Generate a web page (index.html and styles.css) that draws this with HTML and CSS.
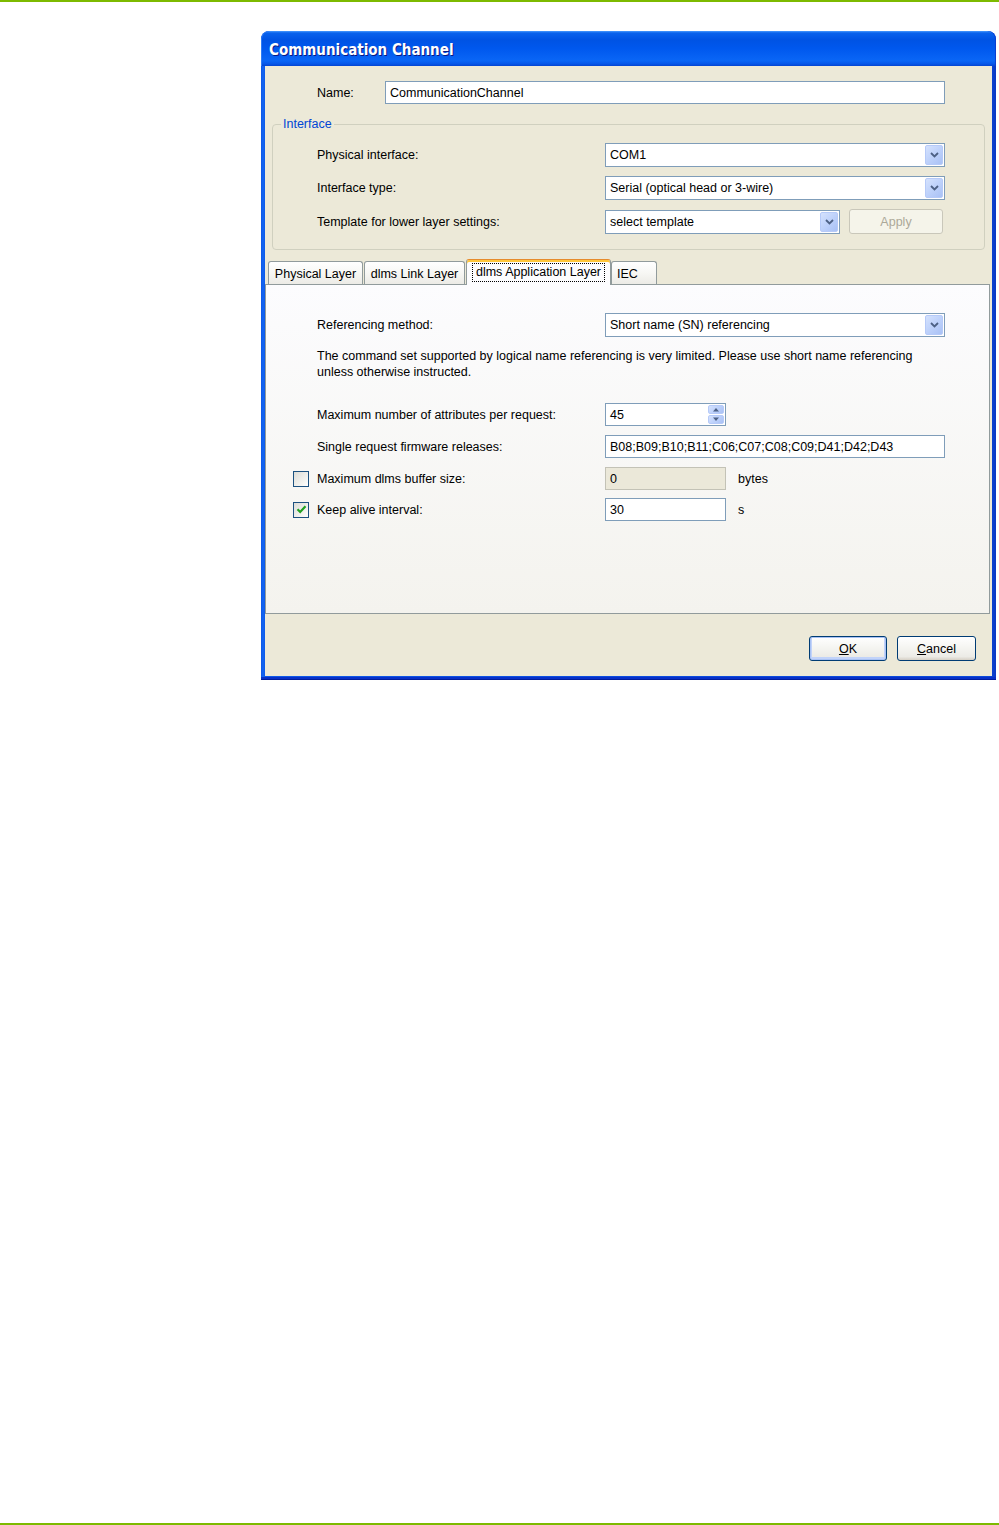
FILE: index.html
```html
<!DOCTYPE html>
<html lang="en">
<head>
<meta charset="utf-8">
<title>Communication Channel</title>
<link rel="stylesheet" href="styles.css">
</head>
<body>
<div class="topline"></div>
<main class="page">
  <section class="dialog">
    <header class="titlebar"><h1>Communication Channel</h1></header>
    <div class="frame">
      <div class="client">
        <div class="name-row">
          <span class="name-lbl">Name:</span>
          <div class="tb name-tb">CommunicationChannel</div>
        </div>

        <fieldset class="group">
          <legend>Interface</legend>
          <div class="grow">
            <span class="glbl">Physical interface:</span>
            <div class="combo w340"><span class="cval">COM1</span><span class="drop"><svg width="9" height="6" viewBox="0 0 9 6"><path d="M1 1 L4.5 4.5 L8 1" fill="none" stroke="#4D6185" stroke-width="1.8"/></svg></span></div>
          </div>
          <div class="grow">
            <span class="glbl">Interface type:</span>
            <div class="combo w340"><span class="cval">Serial (optical head or 3-wire)</span><span class="drop"><svg width="9" height="6" viewBox="0 0 9 6"><path d="M1 1 L4.5 4.5 L8 1" fill="none" stroke="#4D6185" stroke-width="1.8"/></svg></span></div>
          </div>
          <div class="grow">
            <span class="glbl">Template for lower layer settings:</span>
            <div class="combo w235"><span class="cval">select template</span><span class="drop"><svg width="9" height="6" viewBox="0 0 9 6"><path d="M1 1 L4.5 4.5 L8 1" fill="none" stroke="#4D6185" stroke-width="1.8"/></svg></span></div>
            <button class="btn-disabled" type="button">Apply</button>
          </div>
        </fieldset>

        <nav class="tabs">
          <div class="tab t1">Physical Layer</div>
          <div class="tab t2">dlms Link Layer</div>
          <div class="tab t3 active"><span class="focus">dlms Application Layer</span></div>
          <div class="tab t4">IEC</div>
        </nav>

        <div class="panel">
          <div class="frow">
            <span class="lead"></span>
            <span class="flbl">Referencing method:</span>
            <div class="combo w340 h24"><span class="cval">Short name (SN) referencing</span><span class="drop"><svg width="9" height="6" viewBox="0 0 9 6"><path d="M1 1 L4.5 4.5 L8 1" fill="none" stroke="#4D6185" stroke-width="1.8"/></svg></span></div>
          </div>
          <p class="note">The command set supported by logical name referencing is very limited. Please use short name referencing unless otherwise instructed.</p>

          <div class="frow first">
            <span class="lead"></span>
            <span class="flbl">Maximum number of attributes per request:</span>
            <div class="tb spin w121"><span class="cval">45</span>
              <span class="spinbtns">
                <span class="sb"><svg width="8" height="5" viewBox="0 0 8 5"><path d="M1 4.5 L4 1 L7 4.5 Z" fill="#4D6185"/></svg></span>
                <span class="sb"><svg width="8" height="5" viewBox="0 0 8 5"><path d="M1 0.5 L4 4 L7 0.5 Z" fill="#4D6185"/></svg></span>
              </span>
            </div>
          </div>
          <div class="frow">
            <span class="lead"></span>
            <span class="flbl">Single request firmware releases:</span>
            <div class="tb w340">B08;B09;B10;B11;C06;C07;C08;C09;D41;D42;D43</div>
          </div>
          <div class="frow">
            <span class="lead"><span class="cb"></span></span>
            <span class="flbl">Maximum dlms buffer size:</span>
            <div class="tb w121 disabled">0</div>
            <span class="unit">bytes</span>
          </div>
          <div class="frow last">
            <span class="lead"><span class="cb"><svg width="11" height="11" viewBox="0 0 11 11"><path d="M1.5 5.2 L4.2 8 L9.5 2.2" fill="none" stroke="#21A121" stroke-width="2.2"/></svg></span></span>
            <span class="flbl">Keep alive interval:</span>
            <div class="tb w121">30</div>
            <span class="unit">s</span>
          </div>
        </div>

        <div class="buttons">
          <button class="btn default" type="button"><u>O</u>K</button>
          <button class="btn" type="button"><u>C</u>ancel</button>
        </div>
      </div>
    </div>
  </section>
</main>
<div class="bottomline"></div>
</body>
</html>
```

FILE: styles.css
```css
html, body {
  margin: 0;
  padding: 0;
}

body {
  font-family: "Liberation Sans", Arial, sans-serif;
  font-size: 12.5px;
  color: #000;
  background: #fff;
  height: 1525px;
  display: flex;
  flex-direction: column;
  overflow: hidden;
}

.topline,
.bottomline {
  height: 2px;
  flex: none;
  background: #7DBA00;
}

.page {
  flex: 1;
  padding: 29px 0 0 261px;
}

/* ---------- dialog frame ---------- */
.dialog {
  width: 735px;
  height: 649px;
  display: flex;
  flex-direction: column;
  border-radius: 8px 8px 0 0;
  overflow: hidden;
  background: #0A4BDF;
}

.titlebar {
  height: 35px;
  flex: none;
  background: linear-gradient(#4A9BFF 0, #0A62EC 2px, #0053E4 9px, #0058EE 50%, #0A66F6 85%, #0757E8 94%, #0444D2 100%);
  border-radius: 8px 8px 0 0;
  box-shadow: inset 1px 0 #2E7CF6, inset -1px 0 #0A3ED0;
}

.titlebar h1 {
  margin: 0;
  padding: 3px 0 0 8px;
  line-height: 32px;
  font-family: "DejaVu Sans Condensed", "Liberation Sans", sans-serif;
  font-size: 15px;
  font-weight: bold;
  color: #fff;
  text-shadow: 1px 1px #0A1883;
}

.frame {
  flex: 1;
  display: flex;
  padding: 0 4px 4px;
  background: linear-gradient(to right, #0C56E6 0, #1466F2 2px, #0D59EA 4px, #0A4BDF 50%, #0B49DA 99%, #0A38C4 100%);
  box-shadow: inset 0 -1px #001C9C, inset 0 -3px #0630C8;
}

.client {
  flex: 1;
  display: flex;
  flex-direction: column;
  background: #ECE9D8;
}

/* ---------- common controls ---------- */
.tb,
.combo {
  box-sizing: border-box;
  display: flex;
  align-items: center;
  border: 1px solid #7F9DB9;
  background: #fff;
  padding-left: 4px;
  white-space: nowrap;
}

.tb { height: 23px; }
.combo { height: 24px; padding-right: 1px; }

.cval { flex: 1; }

.w340 { width: 340px; }
.w235 { width: 235px; }
.w121 { width: 121px; }

.drop {
  align-self: stretch;
  margin: 1px 0;
  width: 18px;
  box-sizing: border-box;
  border: 1px solid #B6CAF8;
  border-radius: 2px;
  background: linear-gradient(135deg, #D5E2FD 0%, #C0D3FB 45%, #A9C1F5 100%);
  display: flex;
  align-items: center;
  justify-content: center;
}

/* ---------- name row ---------- */
.name-row {
  display: flex;
  align-items: center;
  margin-top: 15px;
  padding-left: 52px;
}

.name-lbl { width: 68px; }
.name-tb { width: 560px; }

/* ---------- group box ---------- */
.group {
  margin: 13px 7px 0;
  padding: 11px 0 15px 44px;
  border: 1px solid #D0D0BF;
  border-radius: 4px;
  min-width: 0;
  display: flex;
  flex-direction: column;
  gap: 9px;
}

.group legend {
  margin-left: -36px;
  padding: 0 2px;
  line-height: 15px;
  color: #0046D5;
}

.grow {
  display: flex;
  align-items: center;
}

.glbl { width: 288px; }

.btn-disabled {
  margin-left: 9px;
  width: 94px;
  height: 25px;
  box-sizing: border-box;
  border: 1px solid #C9C7BA;
  border-radius: 3px;
  background: #F5F4EA;
  color: #ACA899;
  font: inherit;
  padding: 0;
}

/* ---------- tabs ---------- */
.tabs {
  display: flex;
  align-items: flex-end;
  height: 25px;
  margin-top: 9px;
  padding-left: 3px;
}

.tab {
  box-sizing: border-box;
  height: 23px;
  border: 1px solid #919B9C;
  border-bottom: none;
  border-radius: 3px 3px 0 0;
  background: linear-gradient(#FFFFFF, #F7F7F4 50%, #ECEBE6);
  display: flex;
  align-items: center;
  justify-content: center;
  white-space: nowrap;
  padding-top: 2px;
}

.t1 { width: 95px; }
.t2 { width: 101px; margin-left: 1px; }
.t3 { width: 145px; margin-left: 1px; }
.t4 { width: 46px; justify-content: flex-start; padding-left: 5px; }

.tab.active {
  height: 26px;
  margin-bottom: -1px;
  position: relative;
  z-index: 1;
  background: #FCFCFE;
  border-top-color: #E68B2C;
  box-shadow: inset 0 2px #FFC73C;
  padding-top: 0;
  align-items: center;
}

.focus {
  outline: 1px dotted #000;
  outline-offset: 0;
  padding: 1px 3px 2px;
}

/* ---------- tab panel ---------- */
.panel {
  height: 330px;
  box-sizing: border-box;
  margin-right: 2px;
  border: 1px solid #919B9C;
  background: linear-gradient(#FCFCFE, #F4F3EE);
  padding: 28px 0 0 23px;
}

.frow {
  display: flex;
  align-items: center;
  margin-top: 9px;
}

.frow:first-child { margin-top: 0; }
.frow.first { margin-top: 23px; }
.frow.last { margin-top: 8px; }

.lead {
  width: 28px;
  box-sizing: border-box;
  padding-left: 4px;
  flex: none;
  display: flex;
  align-items: center;
}

.flbl { width: 288px; }

.note {
  margin: 11px 0 0 28px;
  width: 632px;
  line-height: 16px;
}

.spin {
  padding-right: 1px;
}

.spinbtns {
  align-self: stretch;
  display: flex;
  flex-direction: column;
  gap: 1px;
  margin: 1px 0;
  width: 16px;
}

.sb {
  flex: 1;
  box-sizing: border-box;
  border: 1px solid #B6CAF8;
  border-radius: 2px;
  background: linear-gradient(135deg, #D5E2FD 0%, #C0D3FB 45%, #A9C1F5 100%);
  display: flex;
  align-items: center;
  justify-content: center;
}

.tb.disabled {
  background: #EBE8D9;
  border-color: #C3C2B6;
}

.unit { margin-left: 12px; }

.cb {
  width: 16px;
  height: 16px;
  box-sizing: border-box;
  border: 1px solid #1C5180;
  background: linear-gradient(135deg, #DCDCD7 0%, #F4F4F1 70%, #FFFFFF 100%);
  display: flex;
  align-items: center;
  justify-content: center;
}

/* ---------- bottom buttons ---------- */
.buttons {
  display: flex;
  justify-content: flex-end;
  gap: 10px;
  margin-top: 22px;
  padding-right: 16px;
}

.btn {
  width: 79px;
  height: 25px;
  box-sizing: border-box;
  border: 1px solid #003C74;
  border-radius: 3px;
  background: linear-gradient(#FFFFFF 0%, #F4F4F0 50%, #ECEBE6 85%, #D6D0C5 100%);
  font: inherit;
  color: #000;
  padding: 0;
}

.btn.default {
  width: 78px;
  box-shadow: inset 0 0 0 1px #A9C2F4, inset 0 -1px 0 2px #C2D3F9;
}
```
